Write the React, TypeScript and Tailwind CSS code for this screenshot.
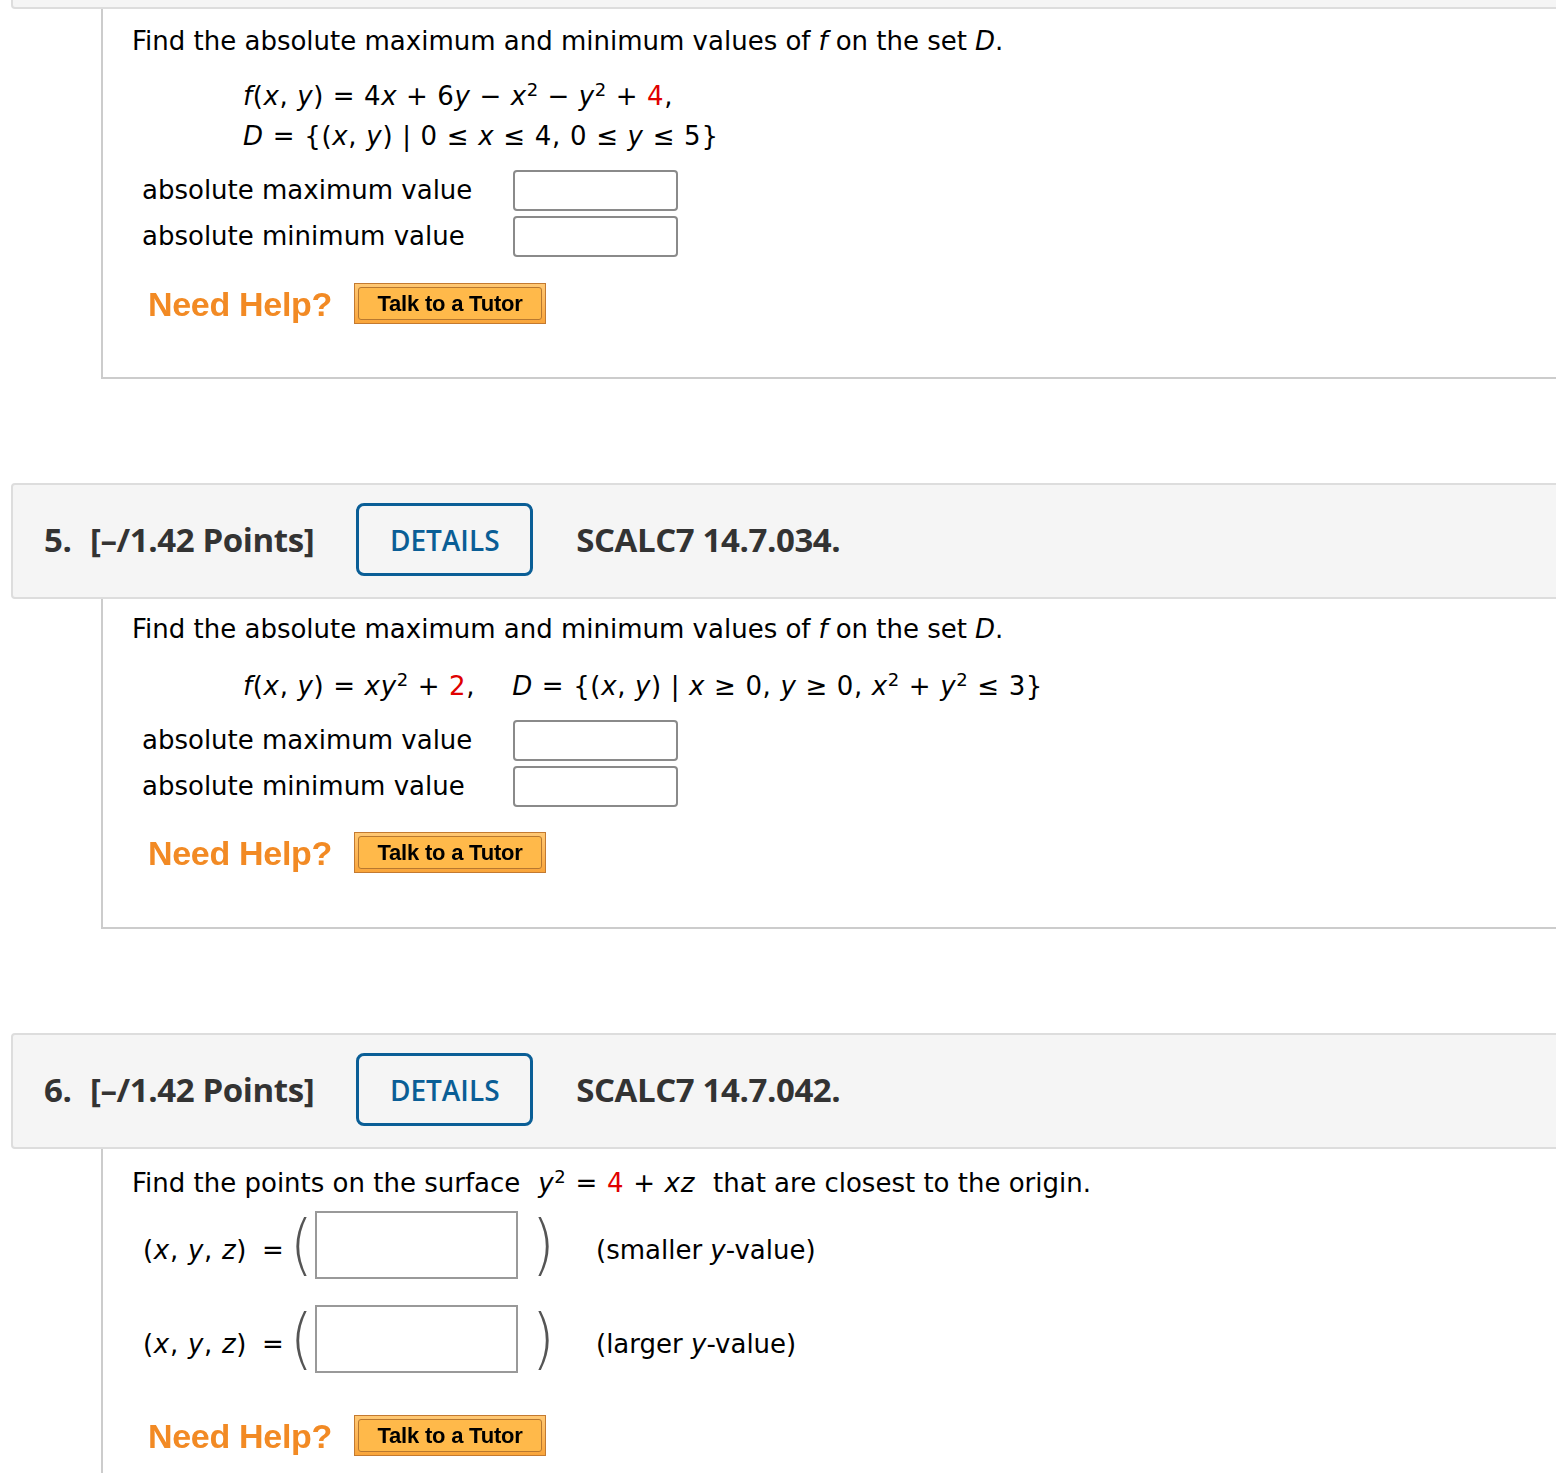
import React from "react";

const I = ({ children }: { children: React.ReactNode }) => <i className="italic">{children}</i>;
const Sup = ({ children }: { children: React.ReactNode }) => (
  <sup className="text-[18px]">{children}</sup>
);
const Red = ({ children }: { children: React.ReactNode }) => <span className="text-[#e00000]">{children}</span>;

function Header({ num, code }: { num: string; code: string }) {
  return (
    <div className="ml-[11px] mr-[-10px] h-[116px] pb-[3px] bg-[#f5f5f5] border-2 border-[#dddddd] rounded-[4px] flex items-center font-['Open_Sans'] font-bold text-[#333] text-[33px] tracking-[-0.4px]">
      <span className="ml-[31px] w-[46px]">{num}</span>
      <span>[–/1.42 Points]</span>
      <div className="ml-[42px] w-[177px] h-[73px] border-[3px] border-[#0a5e96] rounded-[8px] flex items-center justify-center text-[#0a5e96] font-semibold text-[28px] tracking-normal bg-[#f5f5f5]">
        DETAILS
      </div>
      <span className="ml-[43px]">{code}</span>
    </div>
  );
}

function Panel({ children, h }: { children: React.ReactNode; h: string }) {
  return (
    <div className={`ml-[101px] mr-[-10px] border-l-2 border-b-2 border-[#cccccc] ${h}`}>{children}</div>
  );
}

function Help() {
  return (
    <div className="flex items-center">
      <span className="ml-[45px] font-['Liberation_Sans'] font-bold text-[34px] text-[#f28a24] tracking-[-0.3px] blur-[0.5px]">
        Need Help?
      </span>
      <div className="ml-[22px] w-[192px] h-[41px] border border-[#c47a30] bg-gradient-to-b from-[#ffc873] to-[#f9a53a] p-[3px] flex">
        <div className="flex-1 border border-[#b8782f] rounded-[3px] bg-[#ffb94a] flex items-center justify-center font-['Liberation_Sans'] font-bold text-[22px] text-black tracking-[-0.2px] blur-[0.3px]">
          Talk to a Tutor
        </div>
      </div>
    </div>
  );
}

function AnswerRows({ top }: { top: number }) {
  return (
    <div className="ml-[39px]" style={{ marginTop: top }}>
      <div className="flex items-center h-[40px]">
        <span className="w-[371px]">absolute maximum value</span>
        <div className="w-[165px] h-[41px] border-2 border-[#8a8a8a] rounded-[4px] bg-white" />
      </div>
      <div className="flex items-center h-[40px] mt-[6px]">
        <span className="w-[371px]">absolute minimum value</span>
        <div className="w-[165px] h-[41px] border-2 border-[#8a8a8a] rounded-[4px] bg-white" />
      </div>
    </div>
  );
}

function ParenRow({ label }: { label: React.ReactNode }) {
  return (
    <div className="flex items-center h-[68px]">
      <span className="ml-[40px] w-[119px] pt-[10px] tracking-[0.7px]">
        (<I>x</I>, <I>y</I>, <I>z</I>)
      </span>
      <span className="w-[28px] pt-[10px]">=</span>
      <span className="text-[58px] font-extralight leading-none text-[#555] scale-y-[1.12] w-[25px]">(</span>
      <div className="w-[203px] h-[68px] border-2 border-[#999] bg-white" />
      <span className="ml-[14px] text-[58px] font-extralight leading-none text-[#555] scale-y-[1.12] w-[18px]">)</span>
      <span className="ml-[46px] pt-[10px]">{label}</span>
    </div>
  );
}

export default function App() {
  return (
    <div className="w-[1556px] h-[1473px] overflow-hidden bg-white font-['DejaVu_Sans'] text-[26px] text-black leading-none">
      <div className="ml-[11px] mr-[-10px] h-[9px] bg-[#f5f5f5] border-2 border-t-0 border-[#dddddd] rounded-b-[4px]" />
      <Panel h="h-[370px]">
        <div className="pt-[23px] ml-[29px] h-[40px] flex items-center">
          Find the absolute maximum and minimum values of <span className="mx-[8px]"><I>f</I></span> on the set <span className="ml-[8px]"><I>D</I></span>.
        </div>
        <div className="ml-[140px] mt-[27px] h-[40px] flex items-center tracking-[0.6px]">
          <span>
            <I>f</I>(<I>x</I>, <I>y</I>) = 4<I>x</I> + 6<I>y</I> − <I>x</I><Sup>2</Sup> − <I>y</I><Sup>2</Sup> + <Red>4</Red>,
          </span>
        </div>
        <div className="ml-[140px] h-[40px] flex items-center tracking-[0.7px]">
          <span>
            <I>D</I> = {"{"}(<I>x</I>, <I>y</I>) | 0 ≤ <I>x</I> ≤ 4, 0 ≤ <I>y</I> ≤ 5{"}"}
          </span>
        </div>
        <AnswerRows top={14} />
        <div className="mt-[27px]">
          <Help />
        </div>
      </Panel>
      <div className="h-[104px]" />
      <Header num="5." code="SCALC7 14.7.034." />
      <Panel h="h-[330px]">
        <div className="pt-[20px] ml-[29px] h-[40px] flex items-center">
          Find the absolute maximum and minimum values of <span className="mx-[8px]"><I>f</I></span> on the set <span className="ml-[8px]"><I>D</I></span>.
        </div>
        <div className="ml-[140px] mt-[27px] h-[40px] flex items-center tracking-[0.65px]">
          <span>
            <I>f</I>(<I>x</I>, <I>y</I>) = <I>xy</I><Sup>2</Sup> + <Red>2</Red>,
          </span>
          <span className="ml-[37px]">
            <I>D</I> = {"{"}(<I>x</I>, <I>y</I>) | <I>x</I> ≥ 0, <I>y</I> ≥ 0, <I>x</I><Sup>2</Sup> + <I>y</I><Sup>2</Sup> ≤ 3{"}"}
          </span>
        </div>
        <AnswerRows top={14} />
        <div className="mt-[26px]">
          <Help />
        </div>
      </Panel>
      <div className="h-[104px]" />
      <Header num="6." code="SCALC7 14.7.042." />
      <Panel h="h-[400px]">
        <div className="pt-[28px] ml-[29px] h-[40px] flex items-center">
          Find the points on the surface <span className="ml-[18px] tracking-[0.7px]"><I>y</I><Sup>2</Sup> = <Red>4</Red> + <I>xz</I></span>
          <span className="ml-[18px]">that are closest to the origin.</span>
        </div>
        <div className="mt-[22px]">
          <ParenRow label={<>(smaller <I>y</I>-value)</>} />
        </div>
        <div className="mt-[26px]">
          <ParenRow label={<>(larger <I>y</I>-value)</>} />
        </div>
        <div className="mt-[42px]">
          <Help />
        </div>
      </Panel>
    </div>
  );
}
